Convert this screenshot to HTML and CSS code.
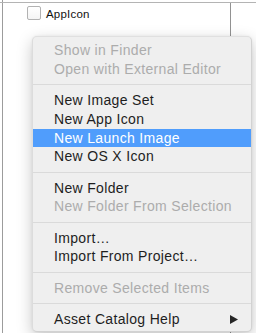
FILE: index.html
```html
<!DOCTYPE html>
<html>
<head>
<meta charset="utf-8">
<link rel="stylesheet" href="styles.css">
</head>
<body>
<div class="app">
  <div class="topgap"></div>
  <div class="hline"></div>
  <div class="content">
    <div class="outline">
      <div class="row">
        <span class="check"></span>
        <span class="label">AppIcon</span>
      </div>
    </div>
  </div>
  <div class="menu">
    <div class="item disabled">Show in Finder</div>
    <div class="item disabled">Open with External Editor</div>
    <div class="sep"></div>
    <div class="item">New Image Set</div>
    <div class="item">New App Icon</div>
    <div class="item active">New Launch Image</div>
    <div class="item">New OS X Icon</div>
    <div class="sep"></div>
    <div class="item">New Folder</div>
    <div class="item disabled">New Folder From Selection</div>
    <div class="sep"></div>
    <div class="item">Import…</div>
    <div class="item">Import From Project…</div>
    <div class="sep"></div>
    <div class="item disabled">Remove Selected Items</div>
    <div class="sep"></div>
    <div class="item submenu"><span>Asset Catalog Help</span><svg class="arrow" width="8" height="9" viewBox="0 0 8 9"><polygon points="0,0 8,4.5 0,9" fill="#262626"/></svg></div>
  </div>
</div>
</body>
</html>
```
FILE: styles.css
```css
html, body {
  margin: 0;
  padding: 0;
  background: #ffffff;
}
.app {
  position: relative;
  width: 256px;
  height: 333px;
  overflow: hidden;
  display: flex;
  flex-direction: column;
  font-family: "Liberation Sans", Arial, sans-serif;
}
.topgap {
  height: 2px;
  margin-left: 2px;
  border-left: 1px solid #9c9c9c;
}
.hline {
  height: 1px;
  background: #b4b4b4;
}
.content {
  flex: 1;
  margin-left: 2px;
  border-left: 1px solid #9c9c9c;
  display: flex;
}
.outline {
  width: 227px;
  border-right: 1px solid #929292;
}
.row {
  display: flex;
  align-items: center;
  padding: 3px 0 0 24px;
  height: 14px;
}
.check {
  box-sizing: border-box;
  width: 14px;
  height: 14px;
  border: 1px solid #b2b2b2;
  border-radius: 2px;
  background: linear-gradient(#ffffff, #f4f4f4);
}
.label {
  margin-left: 5px;
  font-size: 11.5px;
  letter-spacing: 0.2px;
  color: #111;
  line-height: 14px;
  position: relative;
  top: 0.5px;
}
.menu {
  position: absolute;
  left: 33px;
  top: 37px;
  width: 218px;
  padding: 4px 0 2.5px;
  background: #efefef;
  border: 1px solid rgba(0, 0, 0, 0.12);
  border-top-color: rgba(0, 0, 0, 0.06);
  border-left-color: rgba(0, 0, 0, 0.08);
  border-radius: 5px;
  box-sizing: content-box;
  margin-left: -1px;
  margin-top: -1px;
  box-shadow: 0 5px 16px rgba(0, 0, 0, 0.22), 0 0 3px rgba(0, 0, 0, 0.06);
}
.item {
  height: 18.75px;
  line-height: 18.75px;
  padding-left: 21px;
  font-size: 14px;
  letter-spacing: 0.33px;
  color: #1e1e1e;
  white-space: nowrap;
}
.item.disabled {
  color: #acacac;
}
.item.active {
  background: #509dfc;
  color: #ffffff;
}
.submenu {
  display: flex;
  align-items: center;
  justify-content: space-between;
  padding-right: 13px;
}
.arrow {
  display: block;
}
.sep {
  height: 12.5px;
  display: flex;
  flex-direction: column;
  justify-content: center;
}
.sep::before {
  content: "";
  display: block;
  height: 1px;
  background: #dadada;
}
```
